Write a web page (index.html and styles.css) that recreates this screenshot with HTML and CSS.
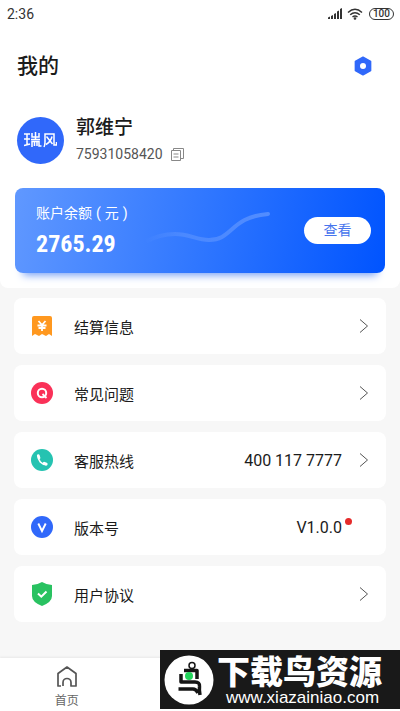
FILE: index.html
```html
<!DOCTYPE html>
<html lang="zh-CN">
<head>
<meta charset="utf-8">
<meta name="viewport" content="width=device-width, initial-scale=1">
<title>我的</title>
<link rel="stylesheet" href="styles.css">
</head>
<body>
<div class="app">
  <section class="profile">
    <div class="status">
      <span>2:36</span>
      <div class="status-icons">
        <svg width="16" height="12" viewBox="0 0 16 12" fill="#333"><path d="M1 9.500l2-1V11H1zM4 8l2-1v4H4zM7 6l2-1v6H7zM10 3.500l2-1V11h-2zM13 1l2-1v11h-2z"/></svg>
        <svg width="16" height="12" viewBox="0 0 16 12" fill="none" stroke="#333" stroke-width="1.500"><path d="M1 4.500Q8-2 15 4.500M3.200 6.800q4.800-4.200 9.600 0M5.500 9q2.500-2 5 0"/><circle cx="8" cy="10.500" r=".6"/></svg>
        <span class="battery">100</span>
      </div>
    </div>
    <header class="title-bar">
      <h1>我的</h1>
      <button class="icon-button" aria-label="设置">
        <svg width="20" height="20" viewBox="0 0 20 20"><path d="M10 1.200l7.600 4.300v9L10 18.800l-7.600-4.300v-9z" fill="#3068fa" stroke="#3068fa" stroke-width="1.500" stroke-linejoin="round"/><circle cx="10" cy="10" r="3" fill="#fff"/></svg>
      </button>
    </header>
    <div class="user">
      <div class="avatar">
        <svg width="33" height="16" viewBox="0 0 33 16" fill="none" stroke="#fff" stroke-width="1.500"><path d="M0 2h6M0 7h6M0 13.500l6-1.500M3 2v10.500M8 1v4h7V1M11.500 0v8M7 7.500h9M8 15V9.500h7V14h2.500M10.500 10v4M13 10v4M20 15q1-2 1-5V2h9v11h2.500V10M22.500 4.500l6 7.500M28 4.500q-1 5-6 8"/></svg>
      </div>
      <div>
        <h2>郭维宁</h2>
        <div class="account">
          <span>75931058420</span>
          <button class="icon-button" aria-label="复制">
            <svg width="14" height="15" viewBox="0 0 14 15" fill="none" stroke="#888"><path d="M3.500 3V1.500h10v10H11M1.500 3.500h9v10h-9zM3.500 7h5M3.500 10h5"/></svg>
          </button>
        </div>
      </div>
    </div>
    <div class="balance">
      <div class="balance-text">
        <div class="balance-label">账户余额<span class="unit">(</span>元<span class="unit">)</span></div>
        <div class="amount">2765.29</div>
      </div>
      <svg class="wave" width="130" height="38" viewBox="0 0 130 38" fill="none" stroke-width="4" stroke-linecap="round">
        <defs><linearGradient id="fade"><stop offset="0" stop-color="#8fb5ff" stop-opacity="0"/><stop offset=".3" stop-color="#8fb5ff" stop-opacity=".25"/><stop offset="1" stop-color="#8fb5ff" stop-opacity=".45"/></linearGradient></defs>
        <path d="M3 30C14 24 24 22 33 22C48 22 54 28 67 28C91 28 88 5 126 2" stroke="url(#fade)"/>
      </svg>
      <button class="view">查看</button>
    </div>
  </section>

  <main class="menu">
    <a class="row" href="#settlement">
      <svg class="icon" width="22" height="24" viewBox="0 0 22 24"><path d="M1 4q0-2 2-2h16q2 0 2 2v18l-3-2-3 2-4-2-3 2-4-2-3 2z" fill="#ff981f"/><path d="M7.500 7l3.500 4 3.500-4M6.500 11.500h9M7.500 14h7M11 10.500V17" fill="none" stroke="#fff" stroke-width="1.800"/></svg>
      <span>结算信息</span>
      <svg class="arrow" width="10" height="16" viewBox="0 0 10 16"><path d="M1 1.500l7.500 6.500L1 14.500"/></svg>
    </a>
    <a class="row" href="#faq">
      <svg class="icon" width="22" height="24" viewBox="0 0 22 24"><circle cx="11" cy="12" r="11" fill="#fa3158"/><circle cx="11" cy="12" r="4.200" fill="none" stroke="#fff" stroke-width="2"/><path d="M11.500 13l4 4" stroke="#fff" stroke-width="1.800"/></svg>
      <span>常见问题</span>
      <svg class="arrow" width="10" height="16" viewBox="0 0 10 16"><path d="M1 1.500l7.500 6.500L1 14.500"/></svg>
    </a>
    <a class="row" href="tel:4001177777">
      <svg class="icon" width="22" height="24" viewBox="0 0 22 24"><circle cx="11" cy="12" r="11" fill="#25c3b1"/><path d="M7.200 7.600Q7 11.500 9.300 14t6 2.600" fill="none" stroke="#fff" stroke-width="1.700"/><path d="M7.300 7.600l.7 2.300M13.200 15.200l2 .9" stroke="#fff" stroke-width="2.800" stroke-linecap="round"/></svg>
      <span>客服热线</span>
      <span class="value">400 117 7777</span>
      <svg class="arrow" width="10" height="16" viewBox="0 0 10 16"><path d="M1 1.500l7.500 6.500L1 14.500"/></svg>
    </a>
    <a class="row" href="#version">
      <svg class="icon" width="22" height="24" viewBox="0 0 22 24"><circle cx="11" cy="12" r="11" fill="#3068fa"/><path d="M7.300 8.500l3.700 7.500 3.700-7.500" fill="none" stroke="#fff" stroke-width="1.900"/></svg>
      <span>版本号</span>
      <span class="value version">V1.0.0<i class="dot"></i></span>
    </a>
    <a class="row" href="#agreement">
      <svg class="icon" width="22" height="24" viewBox="0 0 22 24"><path d="M11 0q5 3 10 3v11q0 6-10 10Q1 20 1 14V3q5 0 10-3z" fill="#29c261"/><path d="M7 11.500l3.300 3.200L15.500 9.500" fill="none" stroke="#fff" stroke-width="2"/></svg>
      <span>用户协议</span>
      <svg class="arrow" width="10" height="16" viewBox="0 0 10 16"><path d="M1 1.500l7.500 6.500L1 14.500"/></svg>
    </a>
  </main>

  <nav class="tabs">
    <a class="tab" href="#home">
      <svg width="22" height="22" viewBox="0 0 22 22" fill="none" stroke="#555" stroke-width="1.700" stroke-linejoin="round"><path d="M7 20v-3.500a4 4 0 0 1 8 0V20h5V7.500L11 1 2 7.500V20h3"/></svg>
      <span>首页</span>
    </a>
  </nav>

  <aside class="banner">
    <svg width="50" height="50" viewBox="0 0 50 50"><circle cx="25" cy="25" r="24.500" fill="#fff"/><g fill="none" stroke="#151515" stroke-width="3.500" stroke-linejoin="round"><circle cx="28" cy="10.500" r="3" stroke-width="1.500"/><path d="M20 15.500h13V24M17 19V27h14q5 0 4.500 4.500Q35 35 36 40M14.500 34h14.500q3 0 5 4"/></g><circle cx="25" cy="21" r="4" fill="#22d45b"/></svg>
    <div class="banner-text">
      <strong>下载鸟资源</strong>
      <span>www.xiazainiao.com</span>
    </div>
  </aside>
</div>
</body>
</html>
```
FILE: styles.css
```css
* { box-sizing: border-box; }
body {
  margin: 0;
  background: #f7f7f7;
  color: #1b1b1b;
  font-family: Roboto, "Noto Sans CJK SC", sans-serif;
  font-size: 15px;
}
h1, h2 { margin: 0; font-weight: 500; }
h1 { font-size: 21px; line-height: 28px; }
h2 { font-size: 19px; line-height: 28px; }
button { font: inherit; border: 0; cursor: pointer; }
a { color: inherit; text-decoration: none; }
svg { display: block; flex: none; }
.app {
  position: relative;
  display: flex;
  flex-direction: column;
  min-height: 100vh;
}
.profile {
  background: #fff;
  border-radius: 0 0 8px 8px;
  padding: 0 15px 15px;
}
.status {
  display: flex;
  justify-content: space-between;
  align-items: center;
  height: 28px;
  margin: 0 -9px 0 -8px;
  font-size: 14px;
  color: #333;
}
.status-icons { display: flex; align-items: center; gap: 4px; }
.battery {
  margin-left: 2px;
  padding: 0 3px;
  border: 1px solid #333;
  border-radius: 6px;
  font-size: 10px;
  line-height: 10px;
  font-weight: 500;
}
.title-bar {
  display: flex;
  justify-content: space-between;
  align-items: center;
  padding: 24px 12px 0 2px;
}
.icon-button { padding: 0; background: none; }
.user {
  display: flex;
  align-items: center;
  gap: 12px;
  padding: 34px 2px 0;
}
.avatar {
  display: grid;
  place-items: center;
  width: 47px;
  height: 47px;
  border-radius: 50%;
  background: #3068fa;
}
.account {
  display: flex;
  align-items: center;
  gap: 7px;
  height: 24px;
  color: #555;
  font-size: 14px;
}
.balance {
  display: flex;
  align-items: center;
  height: 85px;
  margin-top: 22px;
  padding: 0 14px 0 21px;
  border-radius: 8px;
  background: linear-gradient(100deg, #6098ff, #3077ff 50%, #0054ff);
  box-shadow: 0 10px 8px -8px #719cf5;
  color: #fff;
}
.balance-text { padding-top: 5px; }
.balance-label { font-size: 14px; line-height: 22px; }
.unit { padding: 0 4px; }
.amount {
  font-family: "Roboto Condensed", Roboto, sans-serif;
  font-size: 24px;
  line-height: 40px;
  font-weight: 700;
}
.wave { margin: 0 auto 0 10px; }
.view {
  width: 67px;
  height: 27px;
  padding: 0;
  border-radius: 14px;
  background: #fff;
  color: #4775ed;
  font-size: 14px;
  line-height: 27px;
}
.menu {
  display: grid;
  gap: 11px;
  padding: 10px 14px 36px;
}
.row {
  display: flex;
  align-items: center;
  height: 56px;
  padding: 0 17px;
  border-radius: 8px;
  background: #fff;
}
.icon { margin-right: 21px; }
.arrow {
  margin-left: auto;
  fill: none;
  stroke: #555;
  stroke-width: 1;
}
.value { margin-left: auto; font-size: 16px; }
.value + .arrow { margin-left: 17px; }
.version { position: relative; margin-right: 27px; }
.dot {
  position: absolute;
  top: 0;
  right: -10px;
  width: 7px;
  height: 7px;
  border-radius: 50%;
  background: #e52b2b;
}
.tabs {
  flex: 1;
  display: grid;
  grid-template-columns: repeat(3, 1fr);
  background: #fff;
  box-shadow: 0 -1px 2px #e8e8e8;
}
.tab {
  display: flex;
  flex-direction: column;
  align-items: center;
  gap: 4px;
  padding-top: 8px;
  color: #666;
  font-size: 12px;
  line-height: 18px;
}
.banner {
  position: absolute;
  right: 0;
  bottom: 2px;
  display: flex;
  align-items: center;
  gap: 3px;
  width: 240px;
  height: 59px;
  padding-left: 4px;
  background: #191919;
  color: #fff;
}
.banner-text { display: flex; flex-direction: column; }
.banner strong {
  font-family: "Noto Sans CJK SC", sans-serif;
  font-size: 33px;
  line-height: 36px;
  font-weight: 900;
  white-space: nowrap;
}
.banner-text span {
  padding-left: 9px;
  font-family: "Liberation Sans", sans-serif;
  font-size: 17px;
  line-height: 20px;
}
```
